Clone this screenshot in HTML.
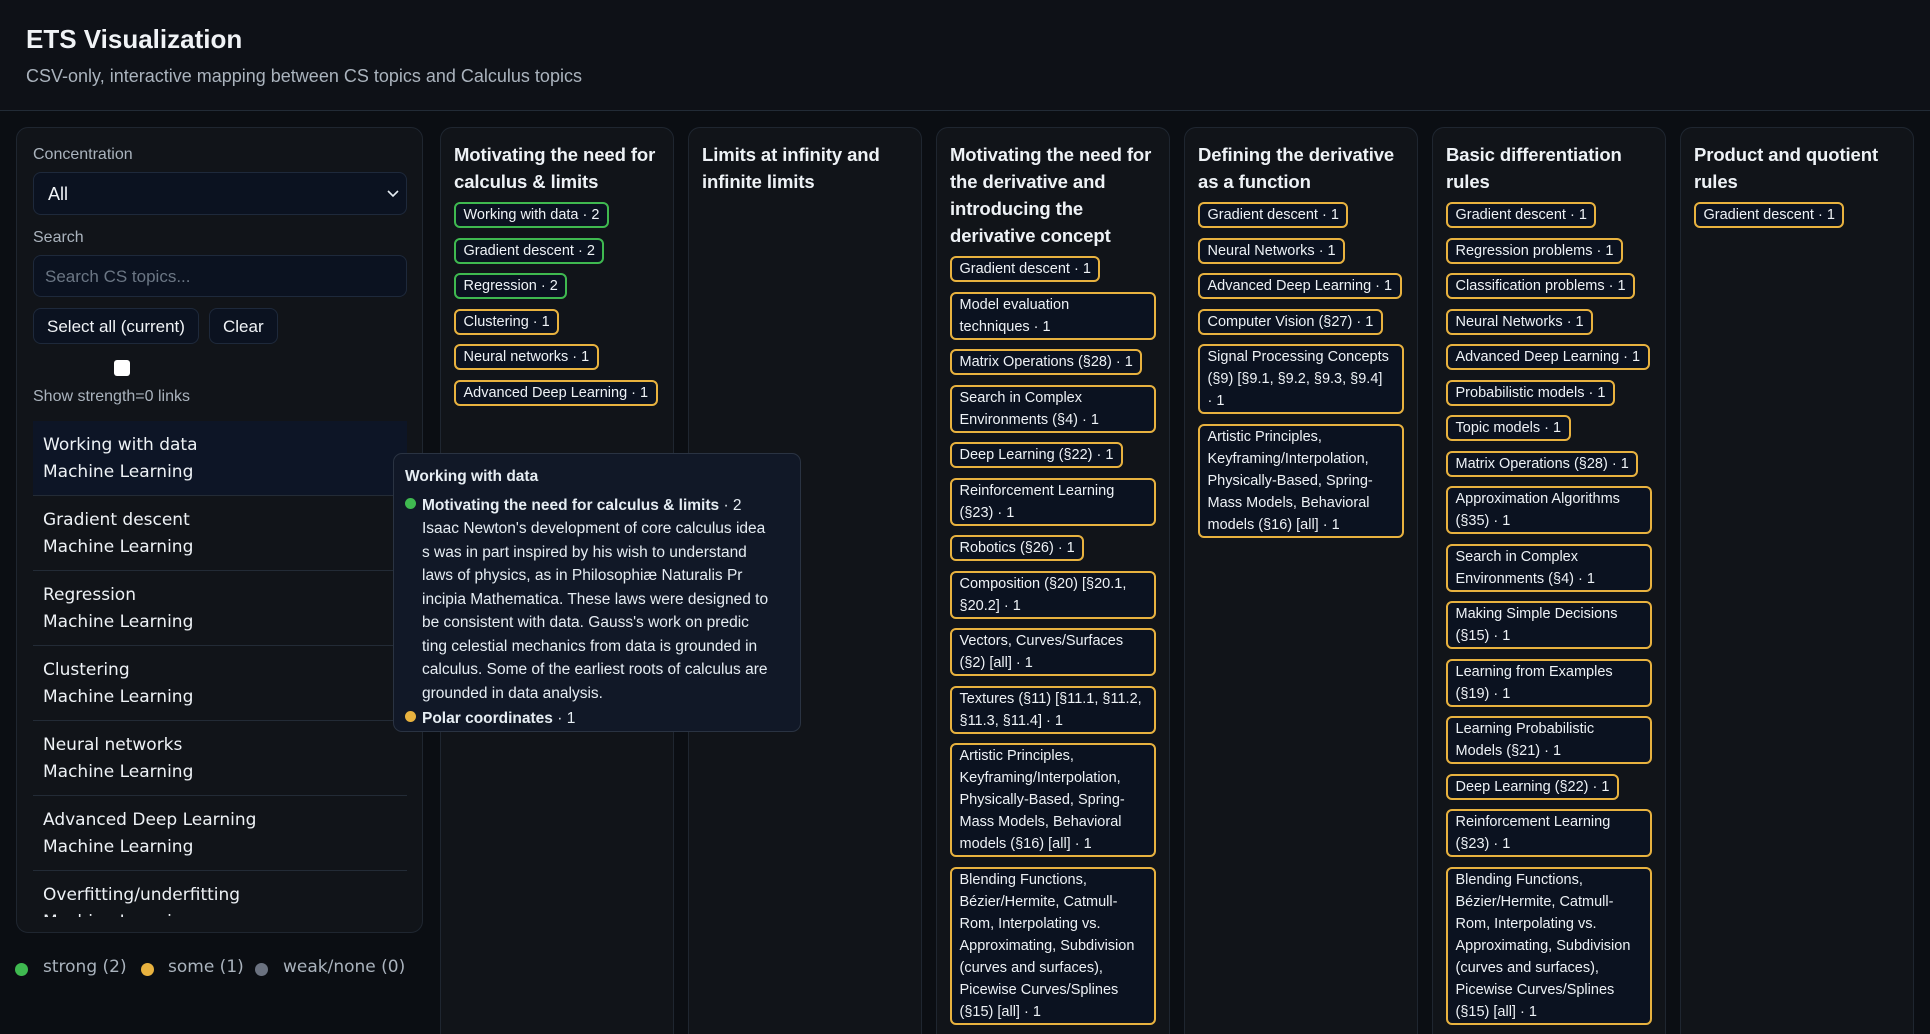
<!DOCTYPE html>
<html><head><meta charset="utf-8"><style>
*{box-sizing:border-box;margin:0;padding:0}
html{overflow:hidden;width:1930px;height:1034px}
body{width:1930px;height:1034px;overflow:hidden;background:#0b0e13;color:#e6edf3;font-family:"Liberation Sans",sans-serif;position:relative}
.hdr{position:absolute;left:0;top:0;width:1930px;height:111px;background:#0e1117;border-bottom:1px solid #222b36}
.hdr h1{position:absolute;left:26px;top:24px;font-size:26px;font-weight:bold;color:#f0f3f6}
.hdr p{position:absolute;left:26px;top:66px;font-size:18px;color:#aab3bd}
.side{position:absolute;left:16px;top:127px;width:407px;height:806px;background:#111419;border:1px solid #1f2630;border-radius:12px}
.lbl{position:absolute;left:16px;font-size:16px;color:#aab3bd}
.sel{position:absolute;left:16px;top:44px;width:374px;height:43px;background:#0b1220;border:1px solid #1e293b;border-radius:8px;font-size:18px;padding:11px 14px;color:#f0f3f6}
.sel svg{position:absolute;right:6px;top:16px}
.inp{position:absolute;left:16px;top:127px;width:374px;height:42px;background:#0b1220;border:1px solid #1e293b;border-radius:8px;font-size:17px;padding:11px 11px;color:#6b7684}
.btn{position:absolute;top:180px;height:36px;background:#0b1220;border:1px solid #1e293b;border-radius:8px;font-size:17px;padding:8px 13px;color:#f0f3f6}
.cb{position:absolute;left:97px;top:232px;width:16px;height:16px;background:#fff;border-radius:3px}
.list{position:absolute;left:16px;top:293px;width:374px;height:496px;overflow:hidden}
.it{height:75px;border-bottom:1px solid #232b36;padding:11px 10px;font-family:"DejaVu Sans",sans-serif;font-size:17px;line-height:27px;color:#eef2f6}
.it.on{background:#0d1526}
.leg{position:absolute;top:957px;font-family:"DejaVu Sans",sans-serif;font-size:17px;color:#aab3bd}
.dot{position:absolute;top:963px;width:13px;height:13px;border-radius:50%}
.col{position:absolute;top:127px;width:234px;height:907px;overflow:hidden;background:#111419;border:1px solid #1f2630;border-bottom:none;border-radius:12px 12px 0 0;padding:13px 13px}
.col h3{font-size:18.5px;line-height:27px;font-weight:bold;color:#eef2f6;margin-bottom:7px;letter-spacing:-0.1px}
.c{display:table;border:2.5px solid #e8b23f;border-radius:6px;background:#0b1220;font-size:14.5px;line-height:22px;padding:0 7.5px;margin-bottom:9.5px;color:#eef2f6;white-space:nowrap}
.c.g{border-color:#3fb950}
.c.f{width:100%}
.tip{position:absolute;left:393px;top:453px;width:408px;height:279px;background:#111827;border:1px solid #2a3342;border-radius:9px;padding:11px 11px;font-size:15.5px;line-height:23.5px;color:#e6edf3}
.tip b{font-weight:bold}
.tip .row{position:relative;padding-left:17px}
.tip .d{position:absolute;left:0;top:4px;width:11px;height:11px;border-radius:50%}
</style></head><body>
<div class="hdr"><h1>ETS Visualization</h1><p>CSV-only, interactive mapping between CS topics and Calculus topics</p></div>
<div class="side">
<div class="lbl" style="top:18px">Concentration</div>
<div class="sel">All<svg width="14" height="10" viewBox="0 0 14 10"><path d="M2 2l5 5 5-5" stroke="#e6edf3" stroke-width="1.6" fill="none"/></svg></div>
<div class="lbl" style="top:101px">Search</div>
<div class="inp">Search CS topics...</div>
<div class="btn" style="left:16px">Select all (current)</div>
<div class="btn" style="left:192px">Clear</div>
<div class="cb"></div>
<div class="lbl" style="top:260px">Show strength=0 links</div>
<div class="list">
<div class="it on">Working with data<br>Machine Learning</div>
<div class="it">Gradient descent<br>Machine Learning</div>
<div class="it">Regression<br>Machine Learning</div>
<div class="it">Clustering<br>Machine Learning</div>
<div class="it">Neural networks<br>Machine Learning</div>
<div class="it">Advanced Deep Learning<br>Machine Learning</div>
<div class="it">Overfitting/underfitting<br>Machine Learning</div>
</div>
</div>
<div class="dot" style="left:15px;background:#3fb950"></div><div class="leg" style="left:43px">strong (2)</div>
<div class="dot" style="left:141px;background:#e8b23f"></div><div class="leg" style="left:168px">some (1)</div>
<div class="dot" style="left:255px;background:#6b7280"></div><div class="leg" style="left:283px">weak/none (0)</div>

<div class="col" style="left:440px"><h3>Motivating the need for calculus &amp; limits</h3>
<div class="c g">Working with data · 2</div><div class="c g">Gradient descent · 2</div><div class="c g">Regression · 2</div><div class="c">Clustering · 1</div><div class="c">Neural networks · 1</div><div class="c">Advanced Deep Learning · 1</div></div>

<div class="col" style="left:688px"><h3>Limits at infinity and infinite limits</h3></div>

<div class="col" style="left:936px"><h3>Motivating the need for the derivative and introducing the derivative concept</h3>
<div class="c">Gradient descent · 1</div>
<div class="c f">Model evaluation<br>techniques · 1</div>
<div class="c">Matrix Operations (§28) · 1</div>
<div class="c f">Search in Complex<br>Environments (§4) · 1</div>
<div class="c">Deep Learning (§22) · 1</div>
<div class="c f">Reinforcement Learning<br>(§23) · 1</div>
<div class="c">Robotics (§26) · 1</div>
<div class="c f">Composition (§20) [§20.1,<br>§20.2] · 1</div>
<div class="c f">Vectors, Curves/Surfaces<br>(§2) [all] · 1</div>
<div class="c f">Textures (§11) [§11.1, §11.2,<br>§11.3, §11.4] · 1</div>
<div class="c f">Artistic Principles,<br>Keyframing/Interpolation,<br>Physically-Based, Spring-<br>Mass Models, Behavioral<br>models (§16) [all] · 1</div>
<div class="c f">Blending Functions,<br>Bézier/Hermite, Catmull-<br>Rom, Interpolating vs.<br>Approximating, Subdivision<br>(curves and surfaces),<br>Picewise Curves/Splines<br>(§15) [all] · 1</div>
<div class="c f">Camera · 1</div>
</div>

<div class="col" style="left:1184px"><h3>Defining the derivative as a function</h3>
<div class="c">Gradient descent · 1</div><div class="c">Neural Networks · 1</div><div class="c">Advanced Deep Learning · 1</div><div class="c">Computer Vision (§27) · 1</div>
<div class="c f">Signal Processing Concepts<br>(§9) [§9.1, §9.2, §9.3, §9.4]<br>· 1</div>
<div class="c f">Artistic Principles,<br>Keyframing/Interpolation,<br>Physically-Based, Spring-<br>Mass Models, Behavioral<br>models (§16) [all] · 1</div></div>

<div class="col" style="left:1432px"><h3>Basic differentiation rules</h3>
<div class="c">Gradient descent · 1</div><div class="c">Regression problems · 1</div><div class="c">Classification problems · 1</div><div class="c">Neural Networks · 1</div><div class="c">Advanced Deep Learning · 1</div><div class="c">Probabilistic models · 1</div><div class="c">Topic models · 1</div><div class="c">Matrix Operations (§28) · 1</div>
<div class="c f">Approximation Algorithms<br>(§35) · 1</div>
<div class="c f">Search in Complex<br>Environments (§4) · 1</div>
<div class="c f">Making Simple Decisions<br>(§15) · 1</div>
<div class="c f">Learning from Examples<br>(§19) · 1</div>
<div class="c f">Learning Probabilistic<br>Models (§21) · 1</div>
<div class="c">Deep Learning (§22) · 1</div>
<div class="c f">Reinforcement Learning<br>(§23) · 1</div>
<div class="c f">Blending Functions,<br>Bézier/Hermite, Catmull-<br>Rom, Interpolating vs.<br>Approximating, Subdivision<br>(curves and surfaces),<br>Picewise Curves/Splines<br>(§15) [all] · 1</div></div>

<div class="col" style="left:1680px"><h3>Product and quotient rules</h3><div class="c">Gradient descent · 1</div></div>

<div class="tip"><div style="font-weight:bold;margin-bottom:5px">Working with data</div>
<div class="row"><span class="d" style="background:#3fb950"></span><b>Motivating the need for calculus &amp; limits</b> · 2<br>Isaac Newton's development of core calculus idea<br>s was in part inspired by his wish to understand<br>laws of physics, as in Philosophiæ Naturalis Pr<br>incipia Mathematica. These laws were designed to<br>be consistent with data. Gauss's work on predic<br>ting celestial mechanics from data is grounded in<br>calculus. Some of the earliest roots of calculus are<br>grounded in data analysis.</div>
<div class="row" style="margin-top:2px"><span class="d" style="background:#e8b23f"></span><b>Polar coordinates</b> · 1</div></div>
</body></html>
